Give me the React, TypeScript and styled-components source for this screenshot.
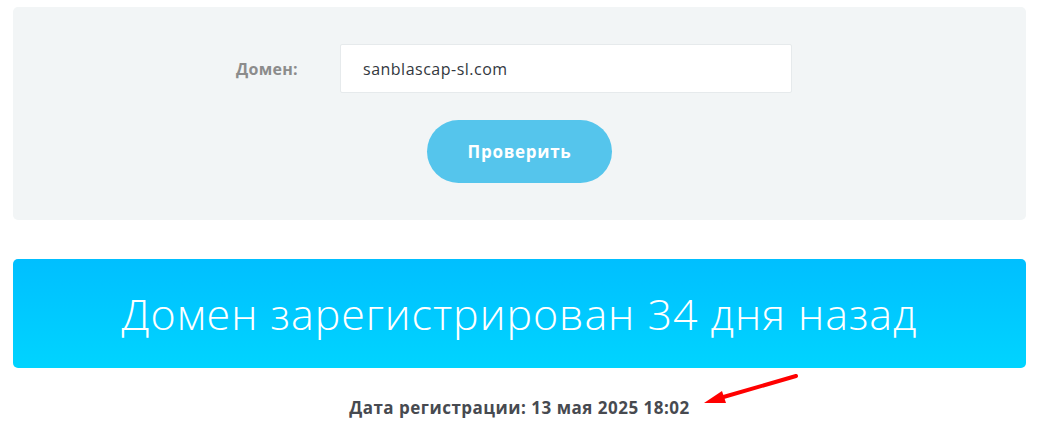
import React from "react";
import styled, { createGlobalStyle } from "styled-components";

const Global = createGlobalStyle`
  html, body { margin: 0; padding: 0; background: #ffffff; }
  body { font-family: "Open Sans", "DejaVu Sans", sans-serif; }
`;

const Page = styled.div`
  width: 1042px;
  padding: 7px 16px 0 13px;
  box-sizing: border-box;
  display: flex;
  flex-direction: column;
`;

const FormPanel = styled.section`
  background: #f2f5f6;
  border-radius: 5px;
  height: 213px;
  box-sizing: border-box;
  padding-top: 37px;
  display: flex;
  flex-direction: column;
  align-items: center;
`;

const FieldRow = styled.div`
  align-self: stretch;
  display: grid;
  grid-template-columns: 327px 452px;
  align-items: center;
`;

const Label = styled.label`
  font-family: "Open Sans", sans-serif;
  font-weight: 700;
  font-size: 16px;
  color: #8c8c8c;
  text-align: right;
  padding-right: 42px;
  letter-spacing: 0.3px;
`;

const Input = styled.div`
  height: 49px;
  box-sizing: border-box;
  background: #ffffff;
  border: 1px solid #e6eaec;
  border-radius: 2px;
  padding-left: 22px;
  display: flex;
  align-items: center;
  font-family: "Open Sans", sans-serif;
  font-size: 16px;
  letter-spacing: 0.5px;
  color: #333840;
`;

const CheckButton = styled.button`
  margin-top: 27px;
  width: 185px;
  height: 63px;
  border: none;
  border-radius: 32px;
  background: #55c5ec;
  color: #ffffff;
  font-family: "Open Sans", sans-serif;
  font-weight: 700;
  font-size: 17px;
  cursor: pointer;
  letter-spacing: 0.7px;
`;

const ResultBanner = styled.div`
  margin-top: 39px;
  height: 109px;
  border-radius: 5px;
  background: linear-gradient(180deg, #00bfff 0%, #00d4ff 100%);
  display: flex;
  align-items: center;
  justify-content: center;
  color: #ffffff;
  font-family: "Open Sans", sans-serif;
  font-weight: 300;
  font-size: 43px;
  letter-spacing: 0.95px;
`;

const DateLine = styled.div`
  margin-top: 28px;
  text-align: center;
  font-family: "Open Sans", sans-serif;
  font-weight: 700;
  font-size: 17px;
  letter-spacing: 0.5px;
  color: #474a50;
  line-height: 24px;
`;

const DateText = styled.span`
  position: relative;
  display: inline-block;
`;

const Arrow = styled.svg`
  position: absolute;
  left: 100%;
  top: -24px;
  margin-left: 8px;
  overflow: visible;
`;

export default function App() {
  return (
    <>
      <Global />
      <Page>
        <FormPanel>
          <FieldRow>
            <Label>Домен:</Label>
            <Input>sanblascap-sl.com</Input>
          </FieldRow>
          <CheckButton>Проверить</CheckButton>
        </FormPanel>
        <ResultBanner>Домен зарегистрирован 34 дня назад</ResultBanner>
        <DateLine>
          <DateText>
            Дата регистрации: 13 мая 2025 18:02
            <Arrow width="100" height="40" viewBox="0 0 100 40">
              <line x1="98" y1="4" x2="22" y2="26" stroke="#ff0000" strokeWidth="4" strokeLinecap="round" />
              <polygon points="6,31 24,19 28,31" fill="#ff0000" />
            </Arrow>
          </DateText>
        </DateLine>
      </Page>
    </>
  );
}
